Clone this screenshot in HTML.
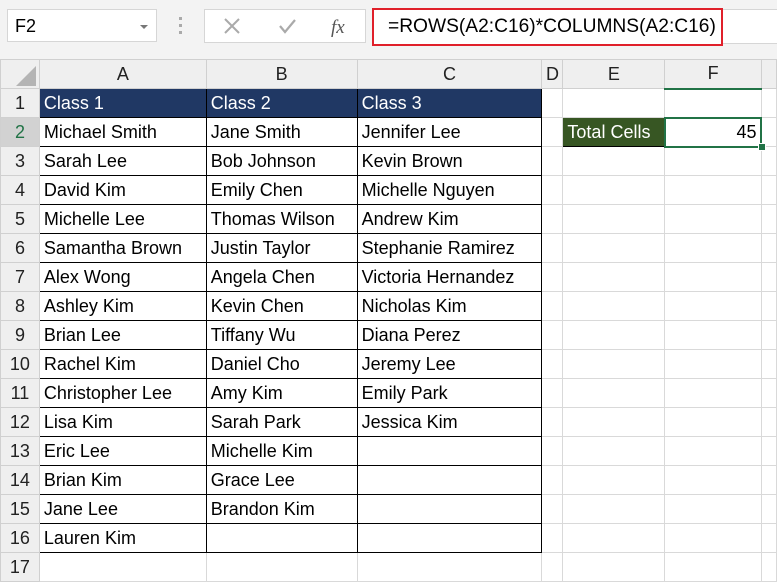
<!DOCTYPE html>
<html><head><style>
body{margin:0;width:777px;height:583px;overflow:hidden;background:#fff;font-family:"Liberation Sans",sans-serif;position:relative}
.top{position:absolute;left:0;top:0;width:777px;height:59px;background:#f3f3f3}
.nb{position:absolute;left:7px;top:9px;width:150px;height:33px;background:#fff;border:1px solid #d6d6d6;font-size:18px;line-height:33px;box-sizing:border-box;padding-left:7px}
.nb:after{content:"";position:absolute;right:8px;top:15px;border-left:4px solid transparent;border-right:4px solid transparent;border-top:4px solid #777}
.dots{position:absolute;left:179px;top:17px;width:3px;height:18px;background:repeating-linear-gradient(#aaa 0 3px,transparent 3px 7px)}
.fxb{position:absolute;left:204px;top:9px;width:162px;height:34px;background:#fff;border:1px solid #d6d6d6;box-sizing:border-box}
.fb{position:absolute;left:372px;top:9px;width:405px;height:35px;background:#fff;border-top:1px solid #d6d6d6;border-bottom:1px solid #d6d6d6;box-sizing:border-box}
.red{position:absolute;left:372px;top:8px;width:351px;height:38px;border:2px solid #e0202a;box-sizing:border-box;font-size:19.2px;line-height:34px;padding-left:14px;background:#fff;white-space:nowrap}
table{position:absolute;left:0;top:59px;border-collapse:collapse;table-layout:fixed;font-size:18px}
td{height:29px;border:1px solid #d9d9d9;padding:0 0 0 4px;white-space:nowrap;overflow:hidden;box-sizing:border-box}
tr.h td{background:#efefef;text-align:center;padding:0;border-color:#d0d0d0;color:#222}
td.r{background:#efefef;text-align:center;padding:0;border-color:#d0d0d0;color:#222}
td.k{border:1px solid #000}
td.hd{background:#203864;color:#fff;border:1px solid #000}
td.sel{background:#d2d2d2;color:#217346}
</style></head><body>
<div class="top"></div>
<div class="nb">F2</div>
<div class="dots"></div>
<div class="fxb">
<svg width="160" height="32" style="position:absolute;left:0;top:0"><path d="M20 9l14 14M34 9L20 23" stroke="#aaa" stroke-width="2" fill="none"/><path d="M75 16l5 6 10-12" stroke="#aaa" stroke-width="2.2" fill="none"/><text x="126" y="23" font-family="Liberation Serif" font-style="italic" font-size="19" fill="#555">fx</text></svg>
</div>
<div class="fb"></div>
<div class="red">=ROWS(A2:C16)*COLUMNS(A2:C16)</div>
<table>
<colgroup><col style="width:39px"><col style="width:167px"><col style="width:151px"><col style="width:185px"><col style="width:21px"><col style="width:102px"><col style="width:97px"><col style="width:15px"></colgroup>
<tr class="h"><td></td><td>A</td><td>B</td><td>C</td><td>D</td><td>E</td><td class="sel" style="border-bottom:2px solid #217346">F</td><td></td></tr>
<tr><td class="r">1</td><td class="hd">Class 1</td><td class="hd">Class 2</td><td class="hd">Class 3</td><td></td><td></td><td></td><td></td></tr>
<tr><td class="r sel">2</td><td class="k">Michael Smith</td><td class="k">Jane Smith</td><td class="k">Jennifer Lee</td><td></td><td style="background:#375623;color:#fff;border:1px solid #000">Total Cells</td><td style="border:2px solid #217346;text-align:right;padding-right:4px">45</td><td></td></tr>
<tr><td class="r">3</td><td class="k">Sarah Lee</td><td class="k">Bob Johnson</td><td class="k">Kevin Brown</td><td></td><td></td><td></td><td></td></tr>
<tr><td class="r">4</td><td class="k">David Kim</td><td class="k">Emily Chen</td><td class="k">Michelle Nguyen</td><td></td><td></td><td></td><td></td></tr>
<tr><td class="r">5</td><td class="k">Michelle Lee</td><td class="k">Thomas Wilson</td><td class="k">Andrew Kim</td><td></td><td></td><td></td><td></td></tr>
<tr><td class="r">6</td><td class="k">Samantha Brown</td><td class="k">Justin Taylor</td><td class="k">Stephanie Ramirez</td><td></td><td></td><td></td><td></td></tr>
<tr><td class="r">7</td><td class="k">Alex Wong</td><td class="k">Angela Chen</td><td class="k">Victoria Hernandez</td><td></td><td></td><td></td><td></td></tr>
<tr><td class="r">8</td><td class="k">Ashley Kim</td><td class="k">Kevin Chen</td><td class="k">Nicholas Kim</td><td></td><td></td><td></td><td></td></tr>
<tr><td class="r">9</td><td class="k">Brian Lee</td><td class="k">Tiffany Wu</td><td class="k">Diana Perez</td><td></td><td></td><td></td><td></td></tr>
<tr><td class="r">10</td><td class="k">Rachel Kim</td><td class="k">Daniel Cho</td><td class="k">Jeremy Lee</td><td></td><td></td><td></td><td></td></tr>
<tr><td class="r">11</td><td class="k">Christopher Lee</td><td class="k">Amy Kim</td><td class="k">Emily Park</td><td></td><td></td><td></td><td></td></tr>
<tr><td class="r">12</td><td class="k">Lisa Kim</td><td class="k">Sarah Park</td><td class="k">Jessica Kim</td><td></td><td></td><td></td><td></td></tr>
<tr><td class="r">13</td><td class="k">Eric Lee</td><td class="k">Michelle Kim</td><td class="k"></td><td></td><td></td><td></td><td></td></tr>
<tr><td class="r">14</td><td class="k">Brian Kim</td><td class="k">Grace Lee</td><td class="k"></td><td></td><td></td><td></td><td></td></tr>
<tr><td class="r">15</td><td class="k">Jane Lee</td><td class="k">Brandon Kim</td><td class="k"></td><td></td><td></td><td></td><td></td></tr>
<tr><td class="r">16</td><td class="k">Lauren Kim</td><td class="k"></td><td class="k"></td><td></td><td></td><td></td><td></td></tr>
<tr><td class="r">17</td><td></td><td></td><td></td><td></td><td></td><td></td><td></td></tr>
</table>
<div style="position:absolute;left:758px;top:143px;width:6px;height:6px;background:#217346;border:1px solid #fff"></div>
<svg style="position:absolute;left:14px;top:66px" width="22" height="20"><path d="M22 0V20H2Z" fill="#b4b4b4"/></svg>
</body></html>
